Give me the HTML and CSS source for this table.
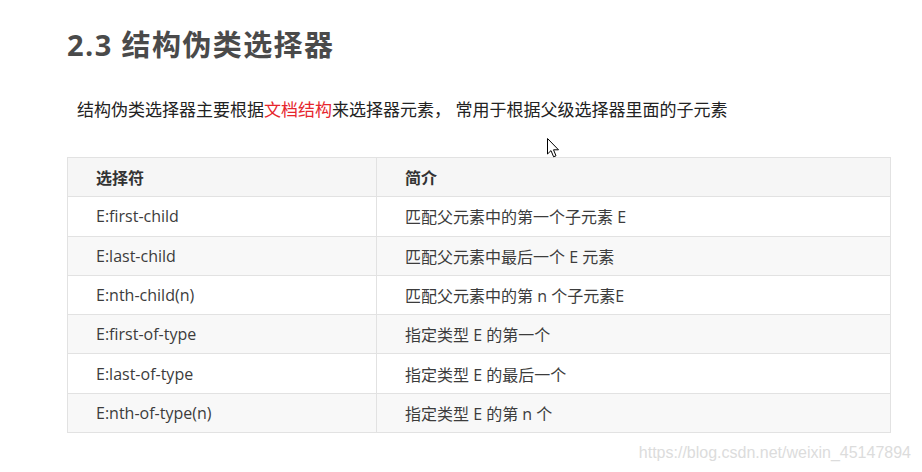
FILE: index.html
```html
<!DOCTYPE html>
<html lang="zh-CN">
<head>
<meta charset="utf-8">
<title>结构伪类选择器</title>
<link rel="stylesheet" href="styles.css">
</head>
<body>
<div class="page">
  <h2 class="title">2.3 结构伪类选择器</h2>
  <p class="intro">结构伪类选择器主要根据<span class="hl">文档结构</span>来选择器元素， 常用于根据父级选择器里面的子元素</p>
  <table class="sel-table">
    <thead>
      <tr><th class="c1">选择符</th><th>简介</th></tr>
    </thead>
    <tbody>
      <tr><td>E:first-child</td><td>匹配父元素中的第一个子元素 E</td></tr>
      <tr><td>E:last-child</td><td>匹配父元素中最后一个 E 元素</td></tr>
      <tr><td>E:nth-child(n)</td><td>匹配父元素中的第 n 个子元素E</td></tr>
      <tr><td>E:first-of-type</td><td>指定类型 E 的第一个</td></tr>
      <tr><td>E:last-of-type</td><td>指定类型 E 的最后一个</td></tr>
      <tr><td>E:nth-of-type(n)</td><td>指定类型 E 的第 n 个</td></tr>
    </tbody>
  </table>
  <div class="footer">https://blog.csdn.net/weixin_45147894</div>
</div>
<svg class="cursor" width="13" height="20" viewBox="0 0 13 20" aria-hidden="true">
  <path d="M0.5 0.5 L0.5 16 L4 12.6 L6.6 18.8 L9 17.8 L6.5 11.8 L11.5 11.8 Z" fill="#fff" stroke="#000" stroke-width="1" stroke-linejoin="miter"/>
</svg>
</body>
</html>
```
FILE: styles.css
```css
html, body {
  margin: 0;
  padding: 0;
  background: #fff;
}
body {
  font-family: "Open Sans", "Noto Sans CJK SC", sans-serif;
  color: #333;
  width: 922px;
  height: 472px;
  overflow: hidden;
  position: relative;
}
.page {
  padding: 25px 32px 0 67px;
}
.title {
  margin: 0;
  font-size: 29px;
  line-height: 40px;
  font-weight: 700;
  color: #4a4a4a;
  letter-spacing: 1.4px;
}
.intro {
  margin: 33px 0 0 10px;
  font-size: 17px;
  line-height: 24px;
  color: #222;
}
.hl {
  color: #e6262d;
}
.sel-table {
  margin-top: 35px;
  width: 824px;
  border-collapse: collapse;
  font-size: 16px;
  color: #3c3c3c;
}
.sel-table th,
.sel-table td {
  border: 1px solid #e2e2e2;
  text-align: left;
  padding: 0 0 0 28px;
  height: 38.3px;
}
.sel-table th {
  font-weight: 700;
  color: #333;
  background: #f6f6f6;
}
.sel-table .c1 {
  width: 280px;
}
.sel-table tbody tr:nth-child(even) td {
  background: #f8f8f8;
}
.footer {
  text-align: right;
  margin: 11px -21px 0 0;
  font-family: "Liberation Sans", sans-serif;
  font-size: 16px;
  line-height: 18px;
  color: #dcdcdc;
}
.cursor {
  position: absolute;
  left: 547px;
  top: 138px;
}
```
